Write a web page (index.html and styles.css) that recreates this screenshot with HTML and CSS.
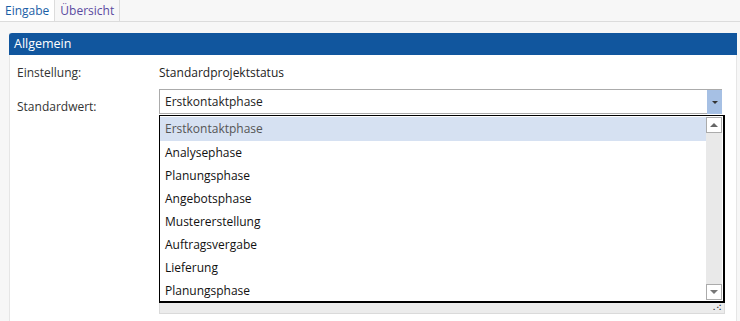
FILE: index.html
```html
<!DOCTYPE html>
<html lang="de">
	<head>
		<meta charset="utf-8">
		<title>Standardprojektstatus</title>
		<link rel="stylesheet" href="styles.css">
	</head>
	<body>
		<div class=tabs>
			<div class="tab active">Eingabe</div>
			<div class=tab>Übersicht</div>
		</div>
		<div class=panel>
			<div class=panelHead>Allgemein</div>
			<div class=panelBody>
				<div class=row>
					<div class=label>Einstellung:</div>
					<div class=value>Standardprojektstatus</div>
				</div>
				<div class="row rowSelect">
					<div class=label>Standardwert:</div>
					<div class=combo>
						<div class=comboBox>
							<span>Erstkontaktphase</span>
							<div class=comboButton><span class=arrowDown></span></div>
						</div>
						<div class=dropList>
							<div class=items>
								<div class="item selected">Erstkontaktphase</div>
								<div class=item>Analysephase</div>
								<div class=item>Planungsphase</div>
								<div class=item>Angebotsphase</div>
								<div class=item>Mustererstellung</div>
								<div class=item>Auftragsvergabe</div>
								<div class=item>Lieferung</div>
								<div class=item>Planungsphase</div>
							</div>
							<div class=scrollbar>
								<div class=scrollButton><span class=arrowUp></span></div>
								<div class=scrollTrack></div>
								<div class=scrollButton><span class=arrowDownGray></span></div>
							</div>
						</div>
						<div class=grip><span class=dots>⠠⠪</span></div>
					</div>
				</div>
			</div>
		</div>
	</body>
</html>
```

FILE: styles.css
```css
* {
	box-sizing:border-box;
}
body {
	margin:0;
	background:#f7f7f7;
	font-family:"Open Sans", "Noto Sans", sans-serif;
	font-size:12px;
	color:#333;
	height:321px;
	overflow:hidden;
}
.tabs {
	display:flex;
	height:22px;
	border-bottom:1px solid #dcdcdc;
	background:#f7f7f7;
}
.tab {
	padding:0 5px;
	line-height:21px;
	color:#5a4aa0;
	border-right:1px solid #dcdcdc;
}
.tab.active {
	color:#1a5ea6;
	background:#fff;
	padding-left:5px;
}
.panel {
	margin:11px 3px 0 9px;
	background:#fff;
	border-left:1px solid #e6e6e6;
	border-right:1px solid #e6e6e6;
	height:300px;
}
.panelHead {
	height:22px;
	line-height:22px;
	padding-left:5px;
	margin-left:-1px;
	margin-right:-1px;
	background:#11569e;
	color:#fff;
	font-size:12.5px;
	border-top-left-radius:3px;
}
.panelBody {
	padding:9px 0 0 7px;
}
.row {
	display:grid;
	grid-template-columns:142px 1fr;
	line-height:18px;
}
.rowSelect {
	margin-top:7px;
}
.rowSelect .label {
	padding-top:9px;
}
.value {
	color:#222;
}
.combo {
	width:566px;
}
.comboBox {
	display:flex;
	align-items:center;
	justify-content:space-between;
	width:563px;
	height:25px;
	border:1px solid #ababab;
	border-right:0;
	padding-left:5px;
	color:#222;
}
.comboButton {
	width:15px;
	height:24px;
	background:#a6c0e4;
	display:flex;
	align-items:center;
	justify-content:center;
}
.arrowDown {
	border-left:3px solid transparent;
	border-right:3px solid transparent;
	border-top:3px solid #333;
	margin-top:2px;
}
.dropList {
	display:flex;
	margin-top:1px;
	height:188px;
	border:1px solid #000;
	border-right-width:2px;
	border-bottom-width:2px;
}
.items {
	flex:1;
	padding-top:1px;
}
.item {
	height:23px;
	line-height:23px;
	padding-left:5px;
	color:#111;
}
.item.selected {
	background:#d6e1f2;
	color:#555;
	height:24px;
}
.scrollbar {
	width:17px;
	display:flex;
	flex-direction:column;
	padding:1px 1px 1px 0;
	background:#fff;
}
.scrollButton {
	height:16px;
	border:1px solid #ababab;
	background:#fff;
	display:flex;
	align-items:center;
	justify-content:center;
}
.scrollTrack {
	flex:1;
	background:#e9e9e9;
}
.arrowUp {
	border-left:4px solid transparent;
	border-right:4px solid transparent;
	border-bottom:4px solid #666;
}
.arrowDownGray {
	border-left:4px solid transparent;
	border-right:4px solid transparent;
	border-top:4px solid #777;
}
.grip {
	height:11px;
	background:#ececec;
	border:1px solid #dadada;
	border-top:0;
	text-align:right;
	font-size:8px;
	line-height:9px;
	color:#333;
	padding-right:2px;
}
```
